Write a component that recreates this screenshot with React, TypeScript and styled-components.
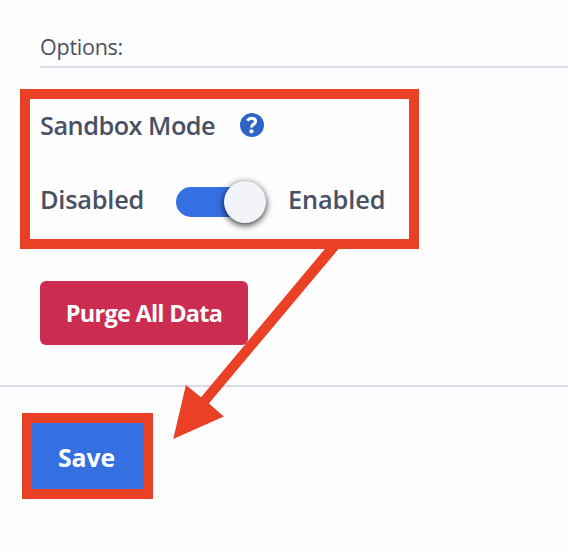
import React from "react";
import styled, { createGlobalStyle } from "styled-components";

const GlobalStyle = createGlobalStyle`
  * { box-sizing: border-box; }
  body { margin: 0; background: #fff; }
`;

const Page = styled.main`
  position: relative;
  width: 568px;
  height: 552px;
  overflow: hidden;
  background: #fefefe;
  color: #4a5064;
  font-family: "Open Sans", "Noto Sans", sans-serif;
`;

const Settings = styled.section`
  display: flex;
  flex-direction: column;
  align-items: flex-start;
  height: 387px;
  padding-left: 40px;
  border-bottom: 2px solid #d9dce7;
`;

const Heading = styled.h2`
  align-self: stretch;
  height: 68px;
  margin: 0;
  padding-top: 32px;
  border-bottom: 2px solid #d9dce7;
  font-size: 21.5px;
  font-weight: 400;
  line-height: 30px;
  letter-spacing: -0.25px;
`;

const Label = styled.span<{ $spacing: number }>`
  font-size: 25.3px;
  font-weight: 600;
  line-height: 34px;
  white-space: nowrap;
  letter-spacing: ${(p) => p.$spacing}px;
`;

const TitleRow = styled.div`
  display: grid;
  grid-template-columns: 200px 24px;
  align-items: center;
  height: 34px;
  margin-top: 40px;
`;

const HelpIcon = styled.svg`
  width: 24px;
  height: 24px;
`;

const ToggleRow = styled.div`
  display: grid;
  grid-template-columns: 136px 112px auto;
  align-items: center;
  height: 42px;
  margin-top: 39px;
`;

const ToggleLabel = styled(Label)`
  align-self: start;
  padding-top: 1px;
`;

const Switch = styled.button`
  display: flex;
  align-items: center;
  justify-content: flex-end;
  width: 86px;
  height: 30px;
  padding: 0;
  border: 0;
  border-radius: 15px;
  background: #3570e3;
`;

const Knob = styled.span`
  flex: none;
  width: 42px;
  height: 42px;
  margin-right: -4px;
  border-radius: 50%;
  background: #f3f4f9;
  box-shadow: 0 2px 7px rgba(0, 0, 0, 0.85);
`;

const Button = styled.button<{ $danger?: boolean }>`
  display: flex;
  align-items: center;
  justify-content: center;
  width: ${(p) => (p.$danger ? 208 : 111)}px;
  height: ${(p) => (p.$danger ? 64 : 66)}px;
  margin: ${(p) => (p.$danger ? "58px 0 0" : "36px 0 0 32px")};
  padding: ${(p) => (p.$danger ? "0" : "1px 2px 0 0")};
  border: 0;
  border-radius: ${(p) => (p.$danger ? 6 : 0)}px;
  background: ${(p) => (p.$danger ? "#cb2c4f" : "#3570e3")};
  color: #fff;
  font: 700 ${(p) => (p.$danger ? 23.5 : 24.8)}px/32px "Open Sans", "Noto Sans", sans-serif;
  letter-spacing: ${(p) => (p.$danger ? -0.75 : -0.1)}px;
  white-space: nowrap;
`;

const Highlight = styled.div<{ $x: number; $y: number; $w: number; $h: number }>`
  position: absolute;
  left: ${(p) => p.$x}px;
  top: ${(p) => p.$y}px;
  width: ${(p) => p.$w}px;
  height: ${(p) => p.$h}px;
  border: 10px solid #ea4025;
  pointer-events: none;
`;

const Arrow = styled.svg`
  position: absolute;
  left: 0;
  top: 0;
  pointer-events: none;
`;

export default function App() {
  return (
    <Page>
      <GlobalStyle />
      <Settings>
        <Heading>Options:</Heading>
        <TitleRow>
          <Label $spacing={-0.5}>Sandbox Mode</Label>
          <HelpIcon viewBox="0 0 24 24" aria-label="Help">
            <circle cx="12" cy="12" r="12" fill="#2d62c6" />
            <path d="M7.4 7.8C8.4 6.1 9.6 5.2 11.7 5.2c2.3 0 3.8 1.3 3.8 3.2 0 3-4 2.8-4 6" fill="none" stroke="#fff" strokeWidth="3" />
            <circle cx="11.5" cy="18.3" r="2.1" fill="#fff" />
          </HelpIcon>
        </TitleRow>
        <ToggleRow>
          <ToggleLabel $spacing={-0.2}>Disabled</ToggleLabel>
          <Switch role="switch" aria-checked="true" aria-label="Sandbox Mode">
            <Knob />
          </Switch>
          <ToggleLabel $spacing={-0.1}>Enabled</ToggleLabel>
        </ToggleRow>
        <Button $danger>Purge All Data</Button>
      </Settings>
      <Button>Save</Button>
      <Highlight $x={20} $y={89} $w={399} $h={160} />
      <Highlight $x={22} $y={413} $w={131} $h={86} />
      <Arrow width="568" height="552" viewBox="0 0 568 552">
        <path d="M329 244L201 397.3L185.9 385L173.2 438.9L223.9 416.4L208.9 403.5L341 246Z" fill="#ea4025" />
      </Arrow>
    </Page>
  );
}
